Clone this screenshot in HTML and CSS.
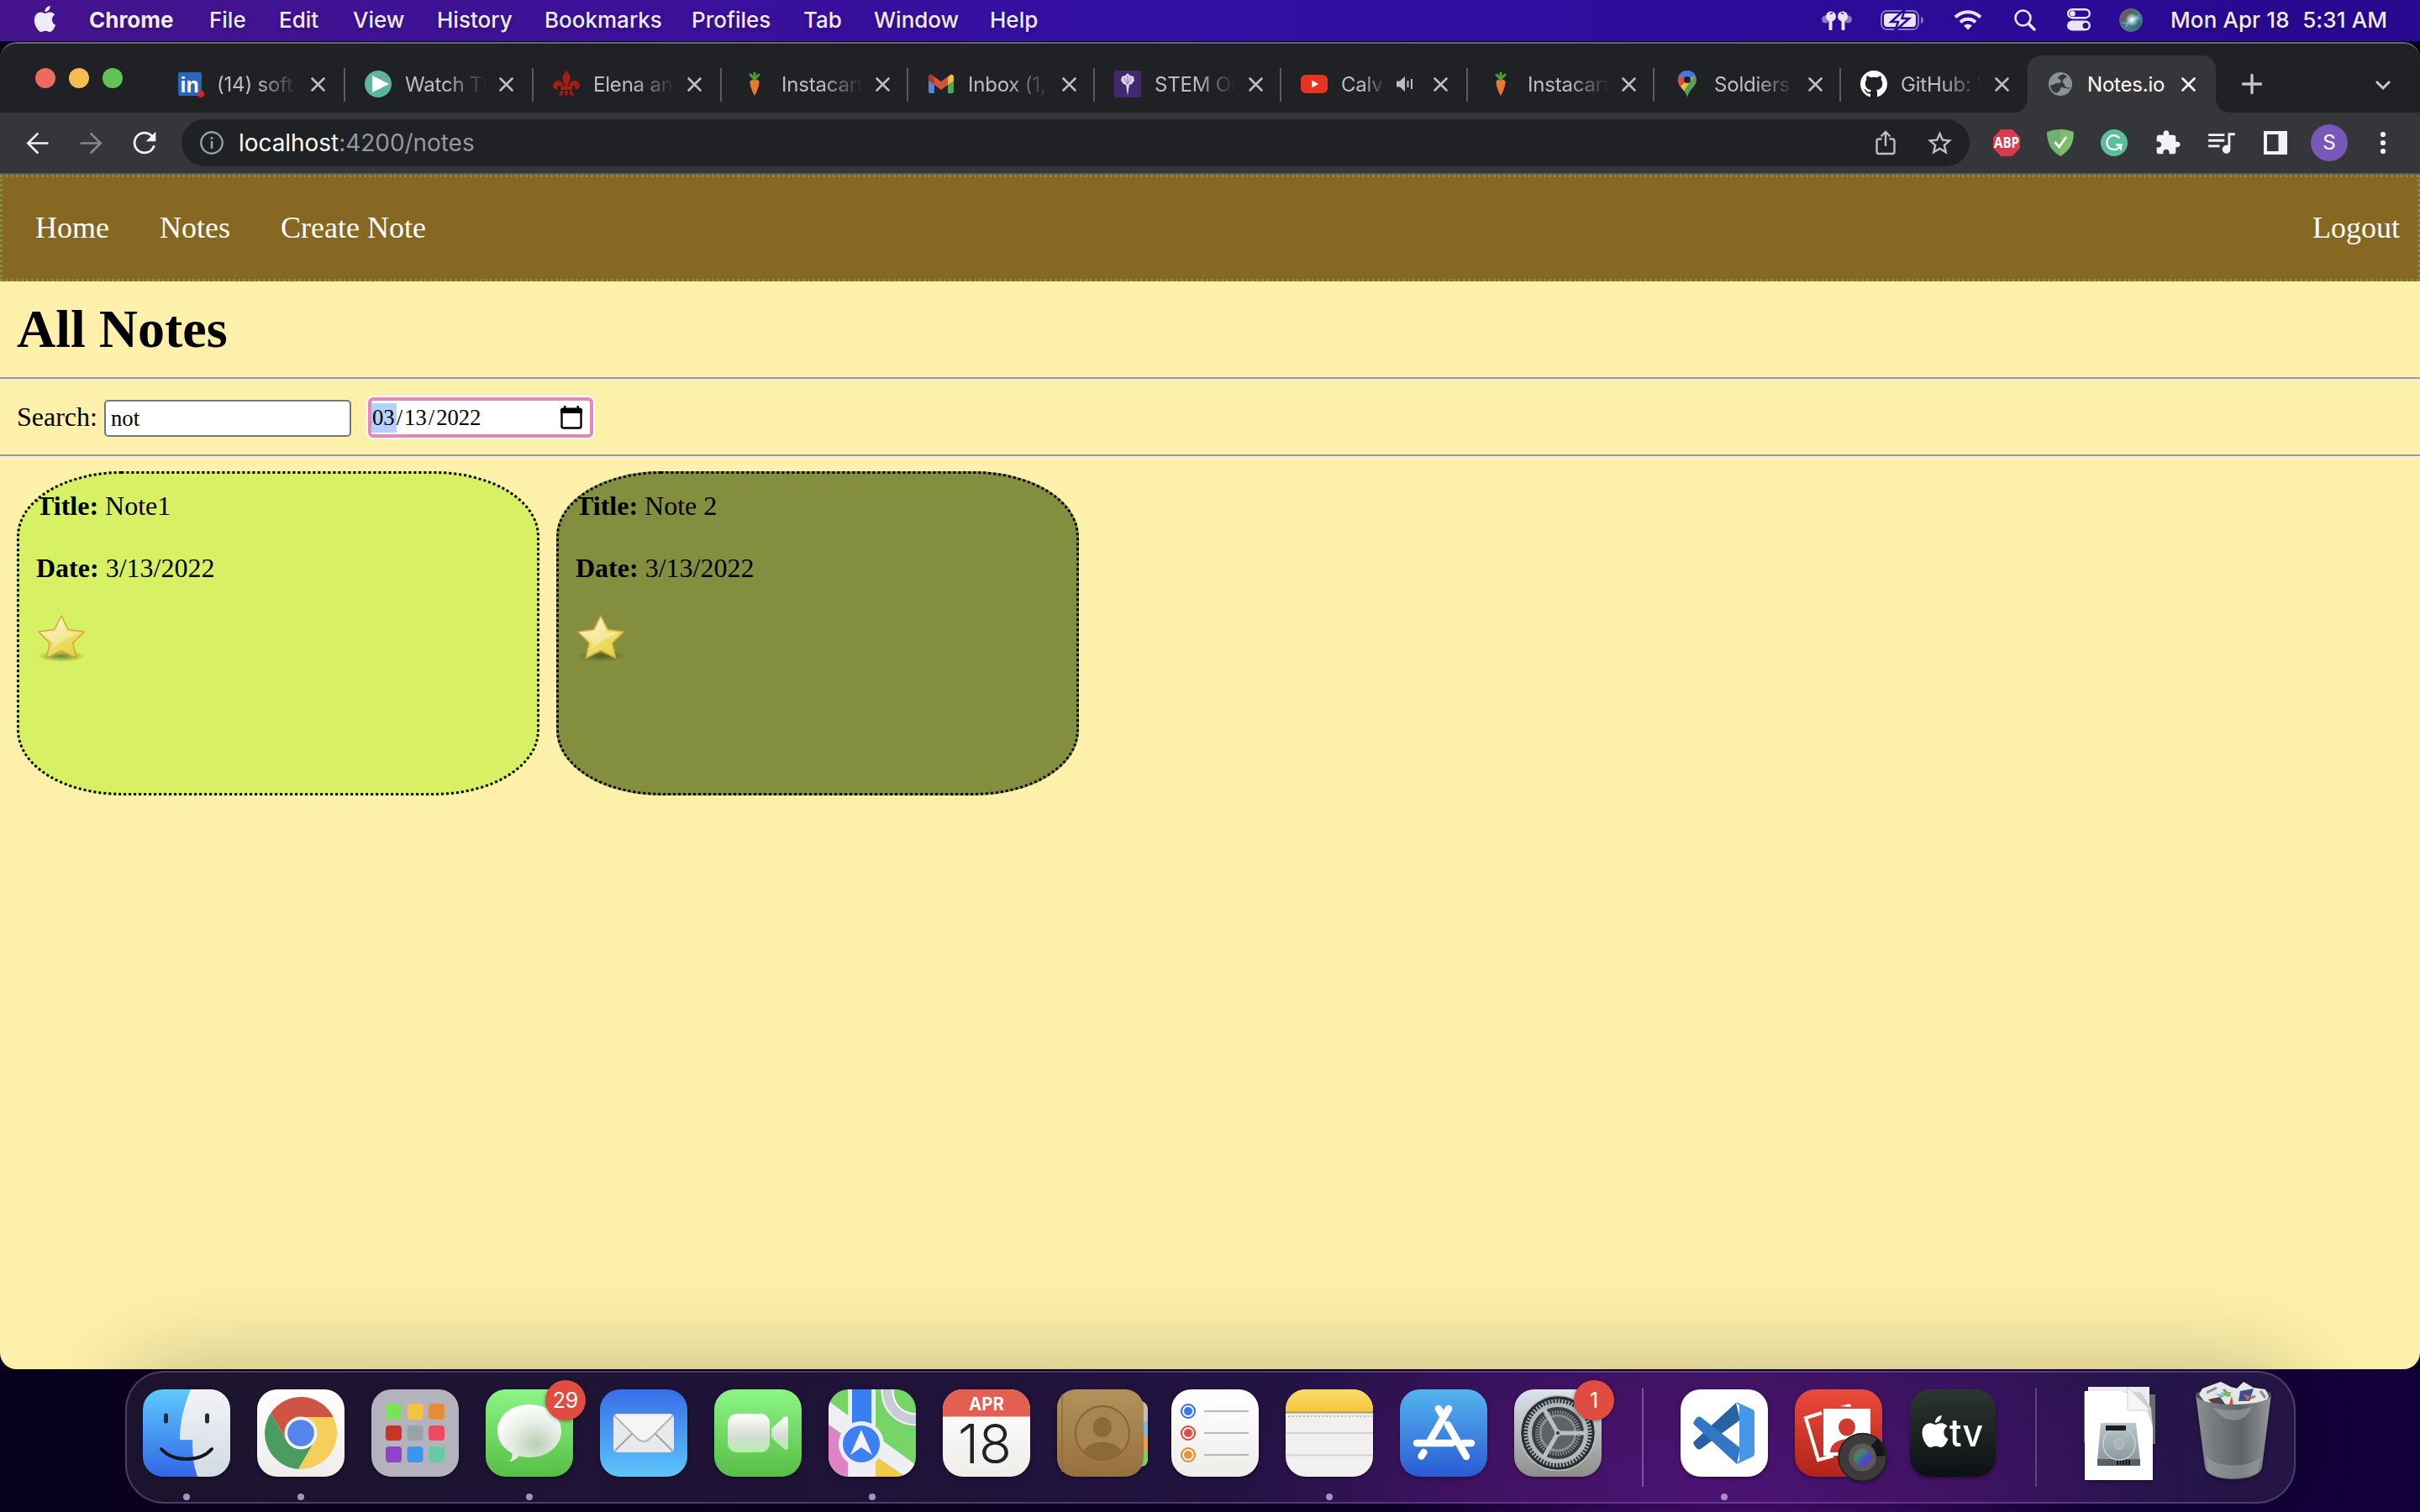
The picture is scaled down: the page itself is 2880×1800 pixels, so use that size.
FILE: index.html
```html
<!DOCTYPE html>
<html lang="en">
<head>
<meta charset="utf-8">
<title>Notes.io</title>
<link rel="stylesheet" href="styles.css">
</head>
<body>
<svg class="defs" width="0" height="0" aria-hidden="true">
  <defs>
    <linearGradient id="green" x1="0" y1="0" x2="0" y2="1"><stop offset="0" stop-color="#8bf585"/><stop offset="1" stop-color="#57bf46"/></linearGradient>
    <linearGradient id="blueUp" x1="0" y1="0" x2="0" y2="1"><stop offset="0" stop-color="#386ee8"/><stop offset="1" stop-color="#5dc5fa"/></linearGradient>
    <linearGradient id="blueDown" x1="0" y1="0" x2="0" y2="1"><stop offset="0" stop-color="#5ecbfa"/><stop offset="1" stop-color="#3465ea"/></linearGradient>
    <linearGradient id="store" x1="0" y1="0" x2="0" y2="1"><stop offset="0" stop-color="#54b4ee"/><stop offset="1" stop-color="#2a5bd3"/></linearGradient>
    <linearGradient id="paper" x1="0" y1="0" x2="0" y2="1"><stop offset="0" stop-color="#ffffff"/><stop offset="1" stop-color="#efedea"/></linearGradient>
    <linearGradient id="silver" x1="0" y1="0" x2="0" y2="1"><stop offset="0" stop-color="#ffffff"/><stop offset=".6" stop-color="#d3dcd2"/><stop offset="1" stop-color="#b4efa6"/></linearGradient>
    <linearGradient id="face" x1="0" y1="0" x2="0" y2="1"><stop offset="0" stop-color="#f3f3f5"/><stop offset="1" stop-color="#d2dae4"/></linearGradient>
    <linearGradient id="yellow" x1="0" y1="0" x2="0" y2="1"><stop offset="0" stop-color="#fadb68"/><stop offset="1" stop-color="#f6c63c"/></linearGradient>
    <linearGradient id="steel" x1="0" y1="0" x2="0" y2="1"><stop offset="0" stop-color="#dbe6ee"/><stop offset="1" stop-color="#8f8d89"/></linearGradient>
    <linearGradient id="red" x1="0" y1="0" x2="0" y2="1"><stop offset="0" stop-color="#ea4b3c"/><stop offset="1" stop-color="#b0241a"/></linearGradient>
    <linearGradient id="brown" x1="0" y1="0" x2="0" y2="1"><stop offset="0" stop-color="#b3925a"/><stop offset="1" stop-color="#97703f"/></linearGradient>
    <linearGradient id="tv" x1="0" y1="0" x2="0" y2="1"><stop offset="0" stop-color="#2c3633"/><stop offset="1" stop-color="#0c1012"/></linearGradient>
    <linearGradient id="drive" x1="0" y1="0" x2="0" y2="1"><stop offset="0" stop-color="#b9c6cb"/><stop offset="1" stop-color="#8c999f"/></linearGradient>
    <linearGradient id="can" x1="0" y1="0" x2="1" y2="0"><stop offset="0" stop-color="#8c9092"/><stop offset=".25" stop-color="#777b7d"/><stop offset=".6" stop-color="#5f6365"/><stop offset="1" stop-color="#94989a"/></linearGradient>
    <linearGradient id="gold" x1="0" y1="0" x2=".6" y2="1"><stop offset="0" stop-color="#fffdf0"/><stop offset=".5" stop-color="#f1e27c"/><stop offset="1" stop-color="#e8d343"/></linearGradient>
    <linearGradient id="iris" x1="0" y1="0" x2="1" y2="1"><stop offset="0" stop-color="#a04a58"/><stop offset=".35" stop-color="#3f8a63"/><stop offset=".6" stop-color="#4250c8"/><stop offset="1" stop-color="#7a35a0"/></linearGradient>
    <linearGradient id="siri" x1="0" y1="0" x2="1" y2="1"><stop offset="0" stop-color="#c3304f"/><stop offset=".3" stop-color="#57615c"/><stop offset=".6" stop-color="#3d7f94"/><stop offset="1" stop-color="#2c5a5a"/></linearGradient>
    <radialGradient id="glow"><stop offset="0" stop-color="#fff"/><stop offset="1" stop-color="#fff" stop-opacity="0"/></radialGradient>
    <radialGradient id="shade"><stop offset="0" stop-color="#3a4510" stop-opacity=".65"/><stop offset="1" stop-color="#3a4510" stop-opacity="0"/></radialGradient>
    <radialGradient id="bubble" cx=".6" cy=".7" r=".7"><stop offset="0" stop-color="#b9cfb2"/><stop offset=".5" stop-color="#e3ebe0"/><stop offset="1" stop-color="#ffffff"/></radialGradient>
    <clipPath id="tile"><rect width="104" height="104" rx="24"/></clipPath>
    <path id="apple" d="M12.152 6.896c-.948 0-2.415-1.078-3.96-1.04-2.04.027-3.91 1.183-4.961 3.014-2.117 3.675-.546 9.103 1.519 12.09 1.013 1.454 2.208 3.09 3.792 3.039 1.52-.065 2.09-.987 3.935-.987 1.831 0 2.35.987 3.96.948 1.637-.026 2.676-1.48 3.676-2.948 1.156-1.688 1.636-3.325 1.662-3.415-.039-.013-3.182-1.221-3.22-4.857-.026-3.04 2.48-4.494 2.597-4.559-1.429-2.09-3.623-2.324-4.39-2.376-2-.156-3.675 1.09-4.61 1.09zM15.53 3.83c.843-1.012 1.4-2.427 1.245-3.83-1.207.052-2.662.805-3.532 1.818-.78.896-1.454 2.338-1.273 3.714 1.338.104 2.715-.688 3.559-1.701"/>
    <path id="cross" d="M1.500 1.500l14 14M15.500 1.500l-14 14" fill="none" stroke="currentColor" stroke-width="2.600" stroke-linecap="round"/>
    <g id="carrot"><path d="M10.500 18c0-5 11-5 11 0 0 4-3 12-5.500 16-2.500-4-5.500-12-5.500-16z" fill="#ee7730" transform="translate(0 -4)"/><path d="M16 11V3M16 10l-5-5M16 10l5-5" stroke="#45a636" stroke-width="3" stroke-linecap="round"/></g>
    <g id="star"><ellipse cx="32" cy="52" rx="29" ry="7" fill="url(#shade)"/><path d="M32 4l8.300 16.500 19 2.500-13.500 13.500 4 18-17.800-9-17.800 9 4-18L4.700 23l19-2.500z" fill="url(#gold)" stroke="#cfa93e" stroke-width="1.500" stroke-linejoin="round"/><path d="M32 9l7 14 14.500 2C44 28 32 33 21 44l2-8L11.500 25 25 23z" fill="#fff" opacity=".3"/></g>
  </defs>
</svg>

<header class="menubar">
  <svg class="menubar-apple" viewBox="0 0 24 24"><use href="#apple"/></svg>
  <nav class="menus">
    <span class="menu menu-app">Chrome</span><span class="menu m-file">File</span><span class="menu m-edit">Edit</span><span class="menu m-view">View</span><span class="menu m-history">History</span><span class="menu m-bookmarks">Bookmarks</span><span class="menu m-profiles">Profiles</span><span class="menu m-tab">Tab</span><span class="menu m-window">Window</span><span class="menu m-help">Help</span>
  </nav>
  <div class="status">
    <svg class="s-pods" width="36" height="28" viewBox="0 0 36 28"><g fill="#e9e4f6"><circle cx="4.500" cy="13" r="4.500" opacity=".5"/><circle cx="31.500" cy="13" r="4.500" opacity=".5"/><ellipse cx="11" cy="9.500" rx="6" ry="6"/><ellipse cx="25" cy="9.500" rx="6" ry="6"/><rect x="8.500" y="12" width="4" height="14" rx="1"/><rect x="23.500" y="12" width="4" height="14" rx="1"/></g><path d="M10 7l3-2M26 7l-3-2" stroke="#2c0b98" stroke-width="1.500"/></svg>
    <svg class="s-batt" width="52" height="26" viewBox="0 0 52 26"><rect x="1" y="2" width="44" height="22" rx="6.500" fill="none" stroke="#e9e4f6" stroke-opacity=".5" stroke-width="2"/><path d="M48 9c4 1 4 7 0 8z" fill="#e9e4f6" opacity=".5"/><rect x="4" y="5" width="38" height="16" rx="4" fill="#e9e4f6"/><path d="M29 0L12.500 15h8.500l-4 11L34 11h-8.500z" fill="#e9e4f6" stroke="#2c0b98" stroke-width="2.500"/></svg>
    <svg class="s-wifi" width="34" height="26" viewBox="0 0 34 26"><g fill="none" stroke="#e9e4f6" stroke-width="4"><path d="M2 9.500c8.500-8.500 21.500-8.500 30 0"/><path d="M8 15.500c5-5 13-5 18 0"/></g><path d="M12 19.500c3-2.500 7-2.500 10 0l-5 5z" fill="#e9e4f6"/></svg>
    <svg class="s-find" width="26" height="26" viewBox="0 0 26 26"><circle cx="10.500" cy="10.500" r="9" fill="none" stroke="#e9e4f6" stroke-width="2.600"/><path d="M17 17l7 7" stroke="#e9e4f6" stroke-width="3.500" stroke-linecap="round"/></svg>
    <svg class="s-ctrl" width="28" height="27" viewBox="0 0 28 27"><rect x="1.200" y="1.200" width="25.600" height="10" rx="5" fill="none" stroke="#e9e4f6" stroke-width="2.400"/><circle cx="6.500" cy="6.200" r="3.300" fill="#e9e4f6"/><rect y="14.500" width="28" height="12" rx="6" fill="#e9e4f6"/><circle cx="22" cy="20.500" r="3.500" fill="#2c0b98"/></svg>
    <svg class="s-siri" width="28" height="28" viewBox="0 0 28 28"><circle cx="14" cy="14" r="13.500" fill="url(#siri)" stroke="#8c9098" stroke-opacity=".6"/><path d="M4 17c7 4 14-9 21-4M8 22c3-8 12-12 16-13" fill="none" stroke="#6fc3f0" stroke-width="2" opacity=".6"/><circle cx="15" cy="13.500" r="8" fill="url(#glow)"/></svg>
    <time class="clock"><span>Mon Apr 18</span><span>5:31 AM</span></time>
  </div>
</header>

<main class="window">
  <div class="tabstrip">
    <div class="lights"><i class="light close"></i><i class="light mini"></i><i class="light zoom"></i></div>
    <div class="tab wide"><svg class="fav" viewBox="0 0 32 32"><rect x="2" y="2" width="28" height="28" rx="2" fill="#2b66bd"/><text x="4.500" y="26" class="fav-in">in</text><circle cx="29" cy="28" r="4" fill="#cc2a22"/></svg><span class="title">(14) soft</span><svg class="x" viewBox="0 0 17 17"><use href="#cross"/></svg></div>
    <div class="tab wide"><svg class="fav" viewBox="0 0 32 32"><circle cx="16" cy="16" r="16" fill="#5fb49c"/><path d="M9 6l20 10L9 26z" fill="#fff"/></svg><span class="title">Watch Th</span><svg class="x" viewBox="0 0 17 17"><use href="#cross"/></svg></div>
    <div class="tab wide"><svg class="fav" viewBox="0 0 32 32"><g fill="#a31d15"><path d="M16 0c3 3 4.500 6 4.500 9S18 15 18 20h-4c0-5-2.500-8-2.500-11S13 3 16 0z"/><path d="M13 20c0-5-3-8-6.500-8S0 15 0 18s3 5 6 4c-1-2-.5-4 1.500-4s2.500 1 2.500 4zM19 20c0-5 3-8 6.500-8S32 15 32 18s-3 5-6 4c1-2 .5-4-1.500-4S22 19 22 22z"/><rect x="9" y="19.500" width="14" height="3.500"/><path d="M14 24h4l-.5 4L16 32l-1.500-4zM9 24h3.500c0 4-1.500 6-5 6v-2.500c1.500 0 1.500-1.500 1.500-3.500zM23 24h-3.500c0 4 1.500 6 5 6v-2.500c-1.500 0-1.500-1.500-1.500-3.500z"/></g></svg><span class="title">Elena and</span><svg class="x" viewBox="0 0 17 17"><use href="#cross"/></svg></div>
    <div class="tab"><svg class="fav" viewBox="0 0 32 32"><use href="#carrot"/></svg><span class="title">Instacart</span><svg class="x" viewBox="0 0 17 17"><use href="#cross"/></svg></div>
    <div class="tab"><svg class="fav" viewBox="0 0 32 32"><path d="M1 8h7v19H3a2 2 0 01-2-2z" fill="#4f86ec"/><path d="M24 8h7v17a2 2 0 01-2 2h-5z" fill="#4fa558"/><path d="M24 8l3-3c2-1 4 0 4 3v4l-7 5z" fill="#f2bd42"/><path d="M1 8c0-3 3-4 5-2l10 7 8-6v10l-8 6-8-6-7-5z" fill="#d8503f"/><path d="M1 8c0-3 2-4 4-3l3 3v9l-7-5z" fill="#b7342b"/></svg><span class="title">Inbox (1,</span><svg class="x" viewBox="0 0 17 17"><use href="#cross"/></svg></div>
    <div class="tab"><svg class="fav" viewBox="0 0 32 32"><rect width="32" height="32" fill="#42286c"/><path d="M16 3l3 3 4 1 1 5-3 4-3 1-2 13-2-13-3-1-3-4 1-5 4-1z" fill="#d9d0e6"/><path d="M12 9l4 7 4-7M16 6v10" fill="none" stroke="#8d7ba8"/></svg><span class="title">STEM Ou</span><svg class="x" viewBox="0 0 17 17"><use href="#cross"/></svg></div>
    <div class="tab"><svg class="fav" viewBox="0 0 32 32"><rect y="5" width="32" height="22" rx="6" fill="#e93323"/><path d="M13 11.500l8 4.500-8 4.500z" fill="#fff"/></svg><span class="title short">Calvi</span><svg class="audio" viewBox="0 0 20 20"><path d="M0 6.500h4L10 1v18l-6-5.500H0z" fill="#bdbec1"/><path d="M13.500 6v8M18 4v12" stroke="#bdbec1" stroke-width="2"/></svg><svg class="x" viewBox="0 0 17 17"><use href="#cross"/></svg></div>
    <div class="tab"><svg class="fav" viewBox="0 0 32 32"><use href="#carrot"/></svg><span class="title">Instacart</span><svg class="x" viewBox="0 0 17 17"><use href="#cross"/></svg></div>
    <div class="tab"><svg class="fav" viewBox="0 0 32 32"><path d="M5 11C5 4 10 0 16 0s11 5 11 11c0 8-9 11-11 21-2-9-11-13-11-21z" fill="#54a25a"/><path d="M5 11c0 6 4 9 7 13L25 5 16 11z" fill="#f3bc42"/><path d="M7 5L16 11l-8 8c-3-4-4-9-1-14z" fill="#dc4b3c"/><path d="M7 5c4-6 14-7 18.500 0L16 13z" fill="#4277e6"/><circle cx="16" cy="11" r="4" fill="#202124"/></svg><span class="title">Soldiers</span><svg class="x" viewBox="0 0 17 17"><use href="#cross"/></svg></div>
    <div class="tab last"><svg class="fav" viewBox="0 0 16 16"><path fill="#fff" d="M8 0C3.580 0 0 3.580 0 8c0 3.540 2.290 6.530 5.470 7.590.4.070.55-.17.55-.38 0-.19-.01-.82-.01-1.490-2.010.37-2.530-.49-2.690-.94-.09-.23-.48-.94-.82-1.130-.28-.15-.68-.52-.01-.53.63-.01 1.080.58 1.230.82.72 1.210 1.870.87 2.330.66.07-.52.28-.87.51-1.070-1.780-.2-3.640-.89-3.640-3.950 0-.87.31-1.590.82-2.150-.08-.2-.36-1.020.08-2.120 0 0 .67-.21 2.200.82.64-.18 1.320-.27 2-.27s1.360.09 2 .27c1.530-1.040 2.200-.82 2.200-.82.44 1.100.16 1.920.08 2.120.51.56.82 1.270.82 2.150 0 3.070-1.870 3.750-3.650 3.950.29.25.54.73.54 1.480 0 1.070-.01 1.930-.01 2.200 0 .21.15.46.55.38A8.010 8.010 0 0016 8c0-4.420-3.580-8-8-8z"/></svg><span class="title">GitHub: V</span><svg class="x" viewBox="0 0 17 17"><use href="#cross"/></svg></div>
    <div class="tab active"><svg class="fav" viewBox="0 0 32 32"><circle cx="16" cy="16" r="14" fill="#8b9197"/><path d="M19 4c-2 2-6 2-6 5 1 2 4 1 4 4-1 3-6 1-8 3s-4 1-5 1c0 6 4 9 8 10 1-2 4-2 4-5s3-2 5-1c3 0 5 2 7-1-5 1-7-1-7-3s-3-2-2-5 3-3 5-5z" fill="#35363a"/></svg><span class="title">Notes.io</span><svg class="x" viewBox="0 0 17 17"><use href="#cross"/></svg></div>
    <svg class="newtab" viewBox="0 0 24 24"><path d="M12 1.500v21M1.500 12h21" stroke="#c3c4c7" stroke-width="3.400" stroke-linecap="round"/></svg>
    <svg class="tabsearch" viewBox="0 0 20 12"><path d="M2 2l8 8 8-8" fill="none" stroke="#c9cacc" stroke-width="3"/></svg>
  </div>

  <div class="toolbar">
    <span class="slot"><svg width="39" height="39" viewBox="0 0 24 24" fill="#f1f2f4"><path d="M20 11.200H7l6-6L12 4l-8 8 8 8 1.100-1.200-6.100-6H20z"/></svg></span>
    <span class="slot"><svg width="39" height="39" viewBox="0 0 24 24" fill="#85878b"><path d="M4 11.200h13l-6-6L12 4l8 8-8 8-1.100-1.200 6.100-6H4z"/></svg></span>
    <span class="slot"><svg width="40" height="40" viewBox="0 0 24 24" fill="#f1f2f4"><path d="M17.650 6.350A7.958 7.958 0 0 0 12 4c-4.420 0-7.990 3.580-7.990 8s3.570 8 7.990 8c3.730 0 6.840-2.550 7.730-6h-1.780A6.200 6.200 0 0 1 12 18.300c-3.500 0-6.300-2.800-6.300-6.300S8.500 5.700 12 5.700c1.700 0 3.300.7 4.400 1.900L13 11h7V4z"/></svg></span>
    <div class="omnibox">
      <svg width="30" height="30" viewBox="0 0 30 30"><circle cx="15" cy="15" r="12.700" fill="none" stroke="#9aa0a6" stroke-width="2.400"/><path d="M13.700 8h2.600v2.800h-2.600zM13.700 13h2.600v9h-2.600z" fill="#9aa0a6"/></svg>
      <span class="url"><b>localhost</b>:4200/notes</span>
      <span class="slot"><svg width="24" height="30" viewBox="0 0 24 30"><path d="M7.500 10.500H4A2.500 2.500 0 001.500 13v12.500A2.500 2.500 0 004 28h16a2.500 2.500 0 002.500-2.500V13a2.500 2.500 0 00-2.500-2.500h-3.500M12 19V3M6.500 7.500L12 2l5.500 5.500" fill="none" stroke="#c0c1c3" stroke-width="2.400"/></svg></span>
      <span class="slot"><svg width="35" height="35" viewBox="0 0 24 24" fill="#c0c1c3"><path d="M22 9.240l-7.190-.62L12 2 9.190 8.630 2 9.240l5.460 4.730L5.820 21 12 17.270 18.180 21l-1.630-7.030L22 9.240zM12 15.400l-3.760 2.270 1-4.280-3.320-2.880 4.380-.38L12 6.100l1.710 4.040 4.380.38-3.320 2.880 1 4.280L12 15.400z"/></svg></span>
    </div>
    <span class="slot"><svg width="32" height="32" viewBox="0 0 32 32"><path d="M9.400 0h13.200L32 9.400v13.200L22.600 32H9.400L0 22.600V9.400z" fill="#d93a4a"/><text x="1" y="22.300" textLength="30" lengthAdjust="spacingAndGlyphs" class="abp">ABP</text></svg></span>
    <span class="slot"><svg width="32" height="32" viewBox="0 0 32 32"><path d="M0 3C6 1 10 0 16 0v32C6 26 0 18 0 3z" fill="#72b070"/><path d="M32 3C26 1 22 0 16 0v32C26 26 32 18 32 3z" fill="#7ebc70"/><path d="M9.500 15l5 6 8.500-12" fill="none" stroke="#fff" stroke-width="2.800"/></svg></span>
    <span class="slot"><svg width="32" height="32" viewBox="0 0 32 32"><circle cx="16" cy="16" r="16" fill="#5abd9b"/><path d="M22.500 10.500a8.500 8.500 0 10-1 11.500l3-3.500h-6.500M24 18v7" fill="none" stroke="#fff" stroke-width="2.300"/></svg></span>
    <span class="slot"><svg width="32" height="32" viewBox="0 0 24 24" fill="#f1f2f4"><path d="M20.500 11H19V7c0-1.100-.9-2-2-2h-4V3.500C13 2.120 11.880 1 10.500 1S8 2.120 8 3.500V5H4c-1.100 0-1.990.9-1.990 2v3.800H3.500c1.490 0 2.700 1.210 2.700 2.700s-1.210 2.700-2.700 2.700H2V20c0 1.100.9 2 2 2h3.800v-1.500c0-1.490 1.210-2.700 2.700-2.700 1.490 0 2.700 1.210 2.700 2.700V22H17c1.100 0 2-.9 2-2v-4h1.500c1.380 0 2.500-1.120 2.500-2.500S21.880 11 20.500 11z"/></svg></span>
    <span class="slot"><svg width="40" height="40" viewBox="0 0 24 24" fill="#f1f2f4"><path d="M14.500 5.500H3v1.700h11.500zm0 4H3v1.700h11.500zM3 15.200h8v-1.700H3zM17 5v8.800c-2.200-.7-4 .9-4 2.900 0 1.700 1.200 3 2.900 3s2.800-1.300 2.800-3V6.700H22V5z" transform="translate(-.5 0)"/></svg></span>
    <span class="slot"><svg width="28" height="28" viewBox="0 0 28 28"><path d="M0 0h28v28H0zM4 4v20h13.500V4z" fill="#f1f2f4" fill-rule="evenodd"/></svg></span>
    <span class="slot"><span class="avatar">S</span></span>
    <span class="slot"><svg width="8" height="28" viewBox="0 0 8 28" fill="#f1f2f4"><circle cx="4" cy="4" r="3.100"/><circle cx="4" cy="14" r="3.100"/><circle cx="4" cy="24" r="3.100"/></svg></span>
  </div>

  <div class="page">
    <nav class="site-nav"><a>Home</a><a>Notes</a><a>Create Note</a><a class="logout">Logout</a></nav>
    <h1>All Notes</h1>
    <hr>
    <form class="search">
      <label for="q">Search:</label>
      <input id="q" class="query" type="text" value="not">
      <div class="date"><span class="part sel">03</span><span class="sep">/</span><span class="part">13</span><span class="sep">/</span><span class="part">2022</span>
        <svg class="cal" viewBox="0 0 26 28"><path d="M1.500 5.500v19a2 2 0 002 2h19a2 2 0 002-2v-19z" fill="none" stroke="#000" stroke-width="2.400"/><path d="M0 9V5c0-1.500 1-2.500 2.500-2.500h21C25 2.500 26 3.500 26 5v4zM4 0h2.500v4H4zM19.500 0H22v4h-2.500z"/></svg></div>
    </form>
    <hr>
    <section class="notes">
      <article class="note lime"><p><b>Title:</b> Note1</p><p><b>Date:</b> 3/13/2022</p><svg class="star" viewBox="0 0 64 64"><use href="#star"/></svg></article>
      <article class="note olive"><p><b>Title:</b> Note 2</p><p><b>Date:</b> 3/13/2022</p><svg class="star" viewBox="0 0 64 64"><use href="#star"/></svg></article>
    </section>
  </div>
</main>

<footer class="desk">
  <div class="dock">
    <div class="app running"><svg viewBox="0 0 104 104"><g clip-path="url(#tile)"><rect width="104" height="104" fill="url(#blueDown)"/><path d="M57 0C48 22 44 40 44 60h15c0 16 1 30 6 44h40V0z" fill="url(#face)"/></g><path d="M27.500 31v7M76.500 31v7" stroke="#26292e" stroke-width="5" stroke-linecap="round"/><path d="M22 71c14 16 46 16 60 0" fill="none" stroke="#15181d" stroke-width="4" stroke-linecap="round"/></svg></div>
    <div class="app running"><svg viewBox="0 0 104 104"><rect width="104" height="104" rx="24" fill="url(#paper)"/><path d="M52 33h38.600A43 43 0 0016.300 28.100L35.500 61.500z" fill="#cf5443"/><path d="M16.300 28.100a43 43 0 0032.900 66.800L68.500 61.500h-33z" fill="#4a9c61"/><path d="M49.200 94.900A43 43 0 0090.600 33H52l16.500 28.500z" fill="#f6ce5b"/><circle cx="52" cy="52" r="19.500" fill="#f3f3f3"/><circle cx="52" cy="52" r="15.800" fill="#5385ec"/></svg></div>
    <div class="app"><svg viewBox="0 0 104 104"><rect width="104" height="104" rx="24" fill="#b4b2bc"/><g><rect x="17" y="17" width="19" height="19" rx="4" fill="#78e355"/><rect x="42.500" y="17" width="19" height="19" rx="4" fill="#f4c143"/><rect x="68" y="17" width="19" height="19" rx="4" fill="#e68b38"/><rect x="17" y="43" width="19" height="18" rx="4" fill="#cb3326"/><rect x="42.500" y="43" width="19" height="18" rx="4" fill="#9aa2a8"/><rect x="68" y="43" width="19" height="18" rx="4" fill="#ea4b61"/><rect x="17" y="68" width="19" height="19" rx="4" fill="#9043c6"/><rect x="42.500" y="68" width="19" height="19" rx="4" fill="#3e92f0"/><rect x="68" y="68" width="19" height="19" rx="4" fill="#6ac9a8"/></g></svg></div>
    <div class="app running"><svg viewBox="0 0 104 104"><rect width="104" height="104" rx="24" fill="url(#green)"/><path d="M52 18c22 0 38 14 38 31.500S74 81 52 81c-4 0-8-.6-12-1.700-4 4-8 6.500-12 6.700 3-3 4-6 3.500-10C20 70 14 60 14 49.500 14 32 30 18 52 18z" fill="url(#bubble)"/></svg><span class="badge">29</span></div>
    <div class="app"><svg viewBox="0 0 104 104"><rect width="104" height="104" rx="24" fill="url(#blueUp)"/><rect x="16" y="29" width="72" height="46" rx="5" fill="#e9e9eb"/><path d="M18 73l24-24M86 73L62 49" stroke="#a3a3a6" stroke-width="2"/><path d="M17 31l28 28c4 4 10 4 14 0l28-28" fill="#f5f5f6" stroke="#b5b5b8" stroke-width="2"/></svg></div>
    <div class="app"><svg viewBox="0 0 104 104"><rect width="104" height="104" rx="24" fill="url(#green)"/><rect x="16" y="29" width="50" height="46" rx="11" fill="url(#silver)"/><path d="M69 46l14-13c2-1.500 5-1 5 2v34c0 3-3 4-5 2L69 58c-1-3-1-9 0-12z" fill="url(#silver)"/></svg></div>
    <div class="app running"><svg viewBox="0 0 104 104"><g clip-path="url(#tile)"><rect width="104" height="104" fill="#76d567"/><path d="M0 40l30 30v34H0z" fill="#dd83c6"/><path d="M56 80l36 24H50z" fill="#f3ca45"/><path d="M0 14l104 76v14H92L0 42z" fill="#eeeff4"/><rect x="23" width="33" height="104" fill="#eeeff4"/><rect x="28" width="23" height="60" fill="#3b7ef3"/><path d="M70 0c0 22 14 36 36 36" fill="none" stroke="#fff" stroke-width="15"/><path d="M70 0c0 22 14 36 36 36" fill="none" stroke="#c9cbd6" stroke-width="11"/></g><circle cx="39" cy="65" r="27" fill="#eeeef2"/><circle cx="39" cy="65" r="22" fill="#3d80f1"/><path d="M39 48l13 30-13-9-13 9z" fill="#f3f4f8"/></svg></div>
    <div class="app"><svg viewBox="0 0 104 104"><g clip-path="url(#tile)"><rect width="104" height="104" fill="url(#paper)"/><rect width="104" height="32.500" fill="#e25f52"/></g><text x="52" y="25" text-anchor="middle" textLength="42" lengthAdjust="spacingAndGlyphs" class="cal-month">APR</text><text x="50" y="87.500" text-anchor="middle" textLength="64" lengthAdjust="spacingAndGlyphs" class="cal-day">18</text></svg></div>
    <div class="app"><svg viewBox="0 0 104 104"><path d="M98 14c7 0 10 5 10 10v14H98z" fill="#bdbdbb"/><path d="M98 38h10v18H98z" fill="#6cbdf0"/><path d="M98 56h10v18H98z" fill="#f19a37"/><path d="M98 74h10v10c0 4-3 8-8 8z" fill="#6bd467"/><rect width="103" height="104" rx="22" fill="url(#brown)"/><path d="M6 6v92" stroke="#8f6c3c" stroke-width="1.500"/><circle cx="54" cy="52" r="32" fill="#a8844f" stroke="#866332" stroke-width="2"/><ellipse cx="54" cy="45" rx="11" ry="12" fill="#8d6936"/><path d="M31 74c7-15 39-15 46 0-11 14-35 14-46 0z" fill="#8d6936"/></svg></div>
    <div class="app"><svg viewBox="0 0 104 104"><rect width="104" height="104" rx="24" fill="url(#paper)"/><g fill="none" stroke-width="2"><circle cx="20" cy="26" r="8" stroke="#2f70e4"/><circle cx="20" cy="52" r="8" stroke="#dc4338"/><circle cx="20" cy="78" r="8" stroke="#dd8b30"/></g><circle cx="20" cy="26" r="5" fill="#3478f6"/><circle cx="20" cy="52" r="5" fill="#e94b3d"/><circle cx="20" cy="78" r="5" fill="#ed9536"/><path d="M39 26h53M39 52h53M39 78h53" stroke="#b9b7bc" stroke-width="2"/></svg></div>
    <div class="app running"><svg viewBox="0 0 104 104"><g clip-path="url(#tile)"><rect width="104" height="104" fill="#f1f0ee"/><rect width="104" height="27" fill="url(#yellow)"/><path d="M0 27.500h104" stroke="#a59a78" stroke-width="2"/><path d="M3 32h100" stroke="#bdbbb7" stroke-width="2" stroke-dasharray="2 2.500"/><path d="M0 52h104M0 78.500h104" stroke="#d3d2d4" stroke-width="2"/></g></svg></div>
    <div class="app"><svg viewBox="0 0 104 104"><rect width="104" height="104" rx="24" fill="url(#store)"/><g fill="none" stroke="#fff" stroke-width="8.500" stroke-linecap="round"><path d="M46 23l4 7M58 23L36 61M20 64h42M84 64h1M57 42l22 38M28.500 75l-3 4.500M76 64h8"/></g></svg></div>
    <div class="app"><svg viewBox="0 0 104 104"><rect width="104" height="104" rx="24" fill="url(#steel)"/><circle cx="52" cy="52" r="44.500" fill="#2b2e30" stroke="#bcc1c3" stroke-width="1.500"/><circle cx="52" cy="52" r="38" fill="none" stroke="#a9aeb1" stroke-width="5" stroke-dasharray="2 1.980"/><circle cx="52" cy="52" r="33.500" fill="#3b3f41" stroke="#b3b9bc" stroke-width="5"/><circle cx="52" cy="52" r="25" fill="none" stroke="#8d9295" stroke-width="4" stroke-dasharray="1.500 1.640"/><circle cx="52" cy="52" r="21" fill="#606366" stroke="#8b9092" stroke-width="3"/><path d="M52 52h34M52 52L35 22.500M52 52L35 81.500" stroke="#b9bfc2" stroke-width="5"/><circle cx="52" cy="52" r="4" fill="#b9bfc2"/><circle cx="52" cy="52" r="2" fill="#333"/></svg><span class="badge">1</span></div>
    <i class="divider"></i>
    <div class="app running"><svg viewBox="0 0 104 104"><rect width="104" height="104" rx="24" fill="#fff"/><path d="M16 62l50-46 4 17v4L24 71c-2 1-4 0-5-1l-3-4c-1-1-1-3 0-4z" fill="#2762a4"/><path d="M16 42c-1-1-1-3 0-4l3-4c1-1 3-2 5-1l46 36v5l-3 15z" fill="#3277c6"/><path d="M66 16l1.500-.5L86 24c1 .5 2 2 2 3v50c0 1-1 2.500-2 3l-18 8.500-2-.5 4-3V19z" fill="#4896e8"/></svg></div>
    <div class="app"><svg viewBox="0 0 104 104"><rect width="104" height="104" rx="24" fill="url(#red)"/><path d="M32 28L13 34l15 50 18-5" fill="none" stroke="#fff" stroke-width="4"/><path d="M54 20l12-3 1 4z" fill="#fff"/><rect x="34" y="23" width="56" height="56" fill="#fff"/><ellipse cx="62" cy="45" rx="10" ry="10.500" fill="#cf3a2c"/><path d="M42 75c0-21 42-21 44 0z" fill="#cf3a2c"/><circle cx="80.500" cy="81" r="28.500" fill="#3b3b3c" stroke="#1d1d1e" stroke-width="1.500"/><path d="M80.500 81l17-22a28 28 0 0110 20z" fill="#161617"/><circle cx="80.500" cy="81" r="16.500" fill="#5a5a5c"/><circle cx="80.500" cy="81" r="10.500" fill="url(#iris)"/></svg></div>
    <div class="app"><svg viewBox="0 0 104 104"><rect x="1" width="102" height="104" rx="24" fill="url(#tv)"/><svg x="12" y="31" width="38" height="38" viewBox="0 0 24 24" fill="#fff"><use href="#apple"/></svg><text x="48" y="68" textLength="40" lengthAdjust="spacingAndGlyphs" class="tv">tv</text></svg></div>
    <i class="divider second"></i>
    <div class="app"><svg viewBox="0 0 104 104"><path d="M10 3h6v60h-6zM86 6h9v59h-9z" fill="#6c6b70"/><path d="M15-3h73v40H15z" fill="#ececec"/><path d="M11 2h45c20 4 34 20 36 44v62H11z" fill="#fff"/><path d="M50 2c22 2 36 16 42 44L90 22 78 4z" fill="#cfcfd1"/><path d="M62-3v28h27z" fill="#f6f6f6" stroke="#d0d0d2"/><path d="M30 40h42l5 45H26z" fill="url(#drive)"/><path d="M26 83h51v8H26z" fill="#5a5f62"/><path d="M49 87h16" stroke="#111" stroke-width="6" stroke-dasharray="2 1.500"/><circle cx="52" cy="65" r="19" fill="none" stroke="#c6d0d4" stroke-width="1.500"/><circle cx="52" cy="65" r="6" fill="#a9b5ba" stroke="#c3cdd1"/><rect x="36" y="43" width="24" height="6" fill="#1b1e20"/></svg></div>
    <div class="app"><svg viewBox="0 0 104 104"><path d="M7 6c0-10 90-10 90 0l-6 8H13z" fill="#4d5154"/><path d="M11 6l4-7 16-6 6-2 12 6 7 2 8-8 12 7 14 2 4 8-4 10-34 6-30-6-8-3z" fill="#e6e6e6"/><path d="M20 4l12-6M40 0l8 8M68 12l10-4M84 2l6 8" stroke="#8c8c8c" stroke-width="3"/><path d="M36 4l14-1-5 6z" fill="#68c64b"/><path d="M30 5l12 2-4 3z" fill="#4db6ee"/><path d="M60 2l16-3-5 15-13 0z" fill="#3f4f94"/><path d="M64 6l8 2-3 6z" fill="#d8692f"/><path d="M50 8l2 12-6 1z" fill="#cf4c37"/><path d="M22 12l14-3 8 11-16-2z" fill="#55433d"/><path d="M7 6c2 16 88 16 90 0L86 92c-2 20-66 20-68 0z" fill="url(#can)"/><path d="M20 80c12 14 54 14 64 0l-3 18c-10 10-50 10-60 0z" fill="#a6aaac" opacity=".45"/><path d="M28 22c14 4 34 4 46-2-6 20-30 24-46 2z" fill="#a5a9ab" opacity=".55"/></svg></div>
  </div>
</footer>
</body>
</html>
```
FILE: styles.css
```css
* { box-sizing: border-box; }

body {
  margin: 0;
  width: 2880px;
  height: 1800px;
  overflow: hidden;
  display: grid;
  grid-template-rows: 49px 1581px 170px;
  font-family: Inter, "Liberation Sans", sans-serif;
  background: #08001c;
}

.defs { position: absolute; }
svg { display: block; flex: none; overflow: visible; }
i { display: block; }

/* Menu bar */
.menubar {
  display: flex;
  align-items: center;
  padding: 0 39px 2px 38px;
  color: #efeaf8;
  font-size: 26px;
  background: linear-gradient(90deg, #46148c 0, #3c1199 25%, #320fa4 50%, #2c0b98 75%, #290990 100%);
  text-shadow: 0 2px 5px rgba(0, 0, 0, .3);
}
.menubar-apple { width: 31px; height: 31px; margin: -3px 37px 0 0; fill: #efeaf8; }
.menus { display: flex; gap: 42px; }
.menu { white-space: nowrap; font-weight: 500; }
.menu-app { width: 101px; font-weight: 700; letter-spacing: 0; }
.m-file { width: 41px; }
.m-edit { width: 46px; }
.m-view { width: 58px; }
.m-history { width: 86px; }
.m-bookmarks { width: 133px; }
.m-profiles { width: 91px; }
.m-tab { width: 42px; }
.m-window { width: 96px; }
.status { display: flex; align-items: center; margin-left: auto; }
.s-pods { margin-right: 34px; }
.s-batt { margin-right: 35px; }
.s-wifi { margin-right: 38px; }
.s-find { margin-right: 37px; }
.s-ctrl { margin-right: 34px; }
.s-siri { margin-right: 33px; }
.clock { display: flex; justify-content: space-between; width: 258px; white-space: nowrap; font-weight: 500; letter-spacing: .1px; }

/* Browser window */
.window {
  display: grid;
  grid-template-rows: 84px 74px 1fr;
  margin-top: 1px;
  border-radius: 20px;
  overflow: hidden;
  background: #35363a;
}
.tabstrip {
  display: flex;
  align-items: stretch;
  padding-top: 14px;
  background: #202124;
  border-top: 2px solid #67686b;
  border-radius: 20px 20px 0 0;
}
.lights { display: flex; gap: 16px; width: 187px; padding: 15px 0 0 42px; }
.light { width: 24px; height: 24px; border-radius: 50%; }
.close { background: #ed6a5f; }
.mini { background: #f4be50; }
.zoom { background: #61c555; }

.tab {
  display: flex;
  align-items: center;
  width: 222px;
  padding-left: 23px;
  color: #bdbec1;
  font-size: 24px;
  background: linear-gradient(#5b5c60, #5b5c60) right 15px / 2px 40px no-repeat;
}
.tab.wide { width: 224px; }
.tab.last { background: none; }
.fav { width: 32px; height: 32px; }
.fav-in { font: 700 25px "Liberation Sans", sans-serif; fill: #fff; }
.title {
  width: 97px;
  margin: 0 15px 0 16px;
  overflow: hidden;
  white-space: nowrap;
  letter-spacing: -.2px;
  -webkit-mask-image: linear-gradient(90deg, #000 50%, transparent);
  mask-image: linear-gradient(90deg, #000 50%, transparent);
}
.title.short { width: 53px; }
.audio { width: 20px; height: 20px; margin: 0 24px 0 -2px; }
.x { width: 17px; height: 17px; }
.tab.active {
  position: relative;
  width: 224px;
  border-radius: 16px 16px 0 0;
  color: #fff;
  background: #35363a;
}
.active .title { -webkit-mask-image: none; mask-image: none; }
.tab.active::before,
.tab.active::after {
  content: "";
  position: absolute;
  bottom: 0;
  width: 16px;
  height: 16px;
}
.tab.active::before { left: -16px; background: radial-gradient(circle at 0 0, transparent 15.5px, #35363a 16px); }
.tab.active::after { right: -16px; background: radial-gradient(circle at 100% 0, transparent 15.5px, #35363a 16px); }
.newtab { width: 24px; height: 24px; margin: 22px 0 0 31px; }
.tabsearch { width: 20px; height: 12px; margin: 29px 34px 0 auto; }

.toolbar {
  display: flex;
  align-items: center;
  padding: 0 12px;
  border-bottom: 2px solid #5b5c60;
}
.slot { display: flex; flex: none; justify-content: center; align-items: center; width: 64px; }
.omnibox {
  display: flex;
  flex: 1;
  align-items: center;
  height: 56px;
  margin: 0 12px;
  padding: 0 4px 0 21px;
  border-radius: 28px;
  background: #202124;
}
.url { flex: 1; margin-left: 17px; color: #96999d; font-size: 28px; letter-spacing: -.05px; }
.url b { color: #fff; font-weight: 400; }
.abp { font: 700 17px "Open Sans", sans-serif; fill: #fff; }
.avatar {
  width: 44px;
  height: 44px;
  border-radius: 50%;
  background: #7858b8;
  color: #fff;
  font-size: 24px;
  line-height: 44px;
  text-align: center;
}

/* Notes page */
.page {
  font-family: "Liberation Serif", "Times New Roman", serif;
  font-size: 32px;
  color: #000;
  background: #fdf0aa;
}
.site-nav {
  display: flex;
  align-items: center;
  gap: 60px;
  height: 127px;
  padding: 0 21px 1px 39px;
  border: 3px dotted #838e3e;
  background: #866823;
  color: #fff;
  font-size: 36px;
}
.logout { margin-left: auto; }
h1 { margin: 0; padding: 20px; height: 114px; font-size: 64px; line-height: 74px; }
hr { height: 4px; margin: 0; border: 0; border-top: 2px solid #9a9a9a; background: #eee; }
.search { display: flex; height: 88px; padding: 0 20px; }
.search label { width: 104px; padding-top: 25px; line-height: 37px; }
.query {
  width: 294px;
  height: 44px;
  margin: 23px 20px 0 0;
  padding: 2px 6px;
  border: 2px solid #767676;
  border-radius: 5px;
  background: #fff;
  font: 26.67px "Liberation Serif", serif;
}
.date {
  display: flex;
  align-items: center;
  width: 268px;
  height: 48px;
  margin-top: 20px;
  padding-right: 9px;
  border: 4px solid #e787b5;
  border-radius: 6px;
  background: #fff;
  box-shadow: 0 0 0 2px #fff;
  font-size: 26.67px;
  line-height: 35px;
}
.part { padding: 0 2px 0 1px; }
.sel { background: #b3d1fc; }
.sep { padding-right: 1px; }
.cal { width: 26px; height: 28px; margin-left: auto; }

.notes { display: flex; gap: 20px; padding: 16px 20px; }
.note {
  width: 622px;
  height: 386px;
  padding: 20px;
  overflow: hidden;
  border: 3px dotted #000;
  border-radius: 20%;
}
.lime { background: #d8f064; }
.olive { background: #838e3e; }
.note p { height: 37px; margin: 0 0 37px; line-height: 37px; }
.star { width: 64px; height: 64px; margin: -3px 0 0 -2px; }

/* Dock */
.desk {
  display: flex;
  align-items: flex-start;
  padding: 2px 148px 0 149px;
  background:
    radial-gradient(ellipse 420px 190px at 2080px 190px, #4c0d74, rgba(60, 8, 100, .7) 55%, transparent),
    linear-gradient(90deg, #08001f, #0c0026 45%, #10002f 64%, #14003a 85%, #12003a);
}
.dock {
  position: relative;
  display: flex;
  flex: 1;
  height: 158px;
  padding: 0 4px 0 3px;
  border: 2px solid rgba(150, 130, 180, .38);
  border-radius: 46px;
  background:
    radial-gradient(ellipse 560px 300px at 1880px 150px, #4c1373, rgba(70, 18, 105, .8) 50%, transparent),
    linear-gradient(90deg, #1c142e, #1f133a 40%, #241248 60%, #2a1453 85%, #231543);
  box-shadow: 0 0 110px rgba(0, 0, 0, .25);
}
.app { position: relative; width: 136px; padding: 20px 16px 0; }
.app svg { width: 104px; height: 104px; }
.app > svg { filter: drop-shadow(0 2px 2px rgba(0, 0, 0, .35)); }
.app > svg svg { width: 38px; height: 38px; }
.running::after {
  content: "";
  position: absolute;
  left: 64px;
  top: 144px;
  width: 8px;
  height: 8px;
  border-radius: 50%;
  background: #a78fc6;
}
.badge {
  position: absolute;
  left: 87px;
  top: 9px;
  width: 48px;
  height: 48px;
  border-radius: 50%;
  background: #e04c40;
  color: #fff;
  font-size: 25px;
  line-height: 48px;
  text-align: center;
  box-shadow: 0 1px 4px rgba(0, 0, 0, .4);
}
.divider { width: 62px; height: 118px; margin-top: 18px; background: linear-gradient(#7e52a0, #7e52a0) 32px 0 / 2px 100% no-repeat; }
.divider.second { background-position: 30px 0; background-image: linear-gradient(#5b4380, #5b4380); }
.cal-month { font: 700 21px Inter, sans-serif; fill: #fff; }
.cal-day { font: 300 64px Inter, sans-serif; fill: #222; }
.tv { font: 500 45px Inter, sans-serif; fill: #fff; }
```
